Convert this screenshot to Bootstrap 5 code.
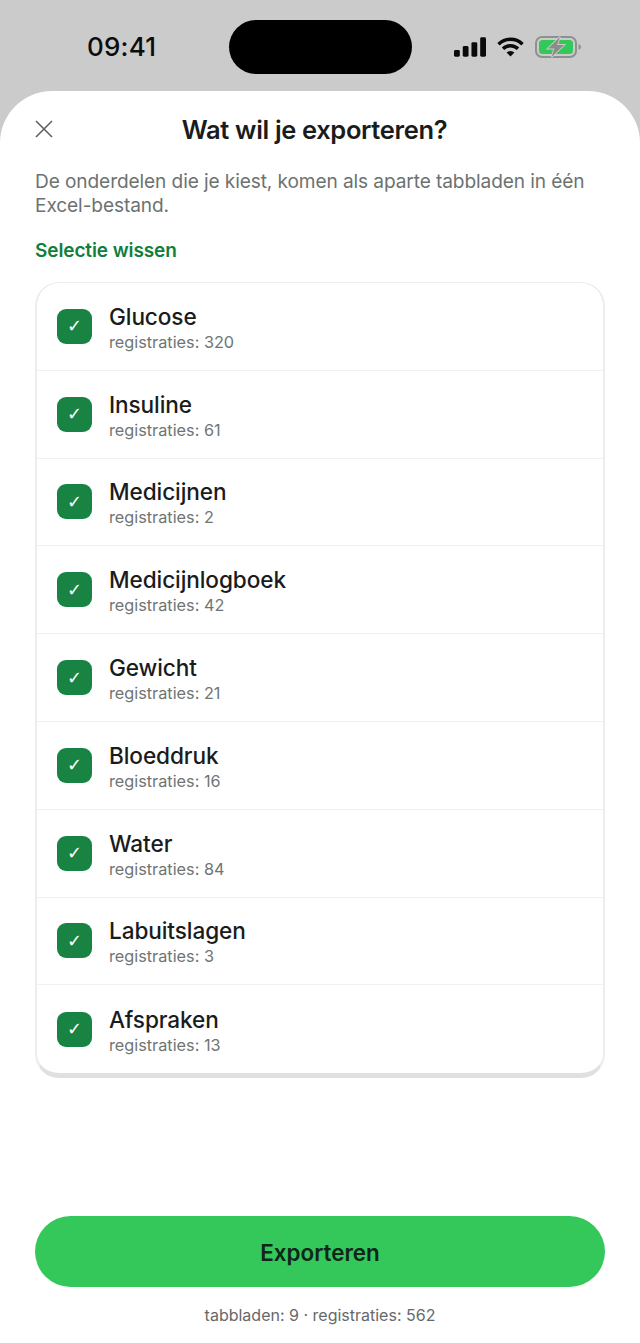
<!DOCTYPE html>
<html lang="nl">
<head>
  <meta charset="UTF-8">
  <meta name="viewport" content="width=device-width, initial-scale=1.0">
  <title>Exporteren</title>
  <link rel="stylesheet" href="https://cdn.jsdelivr.net/npm/bootstrap@5.3.0/dist/css/bootstrap.min.css">
  <style>
    html, body { height: 1343px; overflow: hidden; }
    body { background: #cbcbcb; font-family: Inter, "Liberation Sans", sans-serif; color: #1a1c1c; }
    .phone-status { height: 91px; padding: 20px 59px 0 87px; }
    .phone-time { width: 142px; font-size: 26px; font-weight: 500; line-height: 54px; letter-spacing: .2px; color: #0c0c0c; }
    .phone-island { width: 183px; height: 54px; background: #000; border-radius: 27px; }
    .phone-icons { margin-left: 42px; gap: 11px; height: 54px; }
    .sheet { height: 1252px; background: #fff; border-radius: 52px 52px 0 0; padding: 0 35px; }
    .sheet-head { height: 67px; padding-top: 10px; }
    .close-x { left: 0; top: 29px; width: 18px; height: 18px; }
    .sheet-title { font-size: 25.5px; font-weight: 600; letter-spacing: -.35px; line-height: 28px; margin-top: 15px; padding-right: 11px; }
    .intro { font-size: 19.1px; line-height: 24px; color: #6c7270; letter-spacing: -.1px; margin-top: 11px; }
    .clear-link { font-size: 19px; font-weight: 600; color: #0f7f3d; line-height: 24px; letter-spacing: -.1px; margin-top: 22px; }
    .pick-list { margin-top: 19px; height: 796px; border: 2px solid #ededed; border-top-width: 1.5px; border-bottom: 5px solid #dfe1e0; border-radius: 24px; overflow: hidden; }
    .pick-row { height: 87.8px; padding: 0 0 0 20px; border-bottom: 1px solid #f0f1f0; }
    .pick-row:last-child { border-bottom: 0; }
    .tick-box { width: 35px; height: 35px; border-radius: 9px; background: #188342; color: #fff; font-family: "DejaVu Sans", sans-serif; font-size: 18px; line-height: 1; }
    .pick-text { margin-left: 17px; padding-top: 3px; }
    .pick-name { font-size: 22.6px; font-weight: 500; line-height: 26px; letter-spacing: -.1px; color: #1a1c1c; }
    .pick-count { font-size: 16.25px; line-height: 20px; color: #6f7573; margin-top: 2px; }
    .export-btn { margin-top: 138px; width: 100%; height: 71px; padding-top: 8px; border-radius: 36px; border: 0; background: #34c75a; color: #10261a; font-size: 22.4px; font-weight: 600; }
    .export-btn:hover { background: #34c75a; color: #10261a; }
    .foot-note { margin-top: 18px; font-size: 16px; line-height: 20px; color: #66696a; }
  </style>
</head>

<body>
  <!-- Status bar -->
  <div class="phone-status d-flex">
    <div class="phone-time">09:41</div>
    <div class="phone-island"></div>
    <div class="phone-icons d-flex align-items-center">
      <svg width="32" height="20" viewBox="0 0 33 20" fill="#0a0a0a">
        <rect x="0" y="13" width="6" height="7" rx="1.5"/>
        <rect x="9" y="9" width="6" height="11" rx="1.5"/>
        <rect x="18" y="5" width="6" height="15" rx="1.5"/>
        <rect x="27" y="0" width="6" height="20" rx="1.5"/>
      </svg>
      <svg width="27" height="20" viewBox="0 0 27 20" fill="none" stroke="#0a0a0a" stroke-width="3.4">
        <path d="M1.5 7.2a17 17 0 0 1 24 0"/>
        <path d="M6 11.8a10.6 10.6 0 0 1 15 0"/>
        <path d="M13.5 19.5l-3.9-4a5.500 5.500 0 0 1 7.800 0z" fill="#0a0a0a" stroke="none"/>
      </svg>
      <svg width="46" height="22" viewBox="0 0 46 22">
        <rect x="1" y="1" width="40" height="20" rx="6" fill="none" stroke="#8f918f" stroke-width="2"/>
        <rect x="4" y="4" width="34" height="14" rx="3.500" fill="#34c75a"/>
        <path d="M43.500 8v6c1.500-.5 2.500-1.700 2.500-3s-1-2.500-2.500-3z" fill="#8f918f"/>
        <path d="M25 1L13 12.500h6.500L16.500 21 29 9h-7z" fill="#8a8c8a" stroke="#cbcbcb" stroke-width="1.800" paint-order="stroke"/>
      </svg>
    </div>
  </div>

  <!-- Sheet -->
  <div class="sheet">
    <div class="sheet-head position-relative text-center">
      <svg class="close-x position-absolute" viewBox="0 0 18 18" fill="none" stroke="#5d6160" stroke-width="1.600">
        <path d="M1 1l16 16M17 1L1 17"/>
      </svg>
      <div class="sheet-title">Wat wil je exporteren?</div>
    </div>
    <div class="intro">De onderdelen die je kiest, komen als aparte tabbladen in één Excel-bestand.</div>
    <div class="clear-link">Selectie wissen</div>

    <div class="pick-list" id="pickList"></div>

    <button class="btn export-btn">Exporteren</button>
    <div class="foot-note text-center">tabbladen: 9 · registraties: 562</div>
  </div>

  <script>
    const items = [
      ["Glucose", 320], ["Insuline", 61], ["Medicijnen", 2],
      ["Medicijnlogboek", 42], ["Gewicht", 21], ["Bloeddruk", 16],
      ["Water", 84], ["Labuitslagen", 3], ["Afspraken", 13]
    ];
    document.getElementById("pickList").innerHTML = items.map(([name, count]) => `
      <div class="pick-row d-flex align-items-center">
        <div class="tick-box d-flex align-items-center justify-content-center">✓</div>
        <div class="pick-text">
          <div class="pick-name">${name}</div>
          <div class="pick-count">registraties: ${count}</div>
        </div>
      </div>`).join("");
  </script>

  <script src="https://cdn.jsdelivr.net/npm/bootstrap@5.3.0/dist/js/bootstrap.bundle.min.js"></script>
</body>
</html>
